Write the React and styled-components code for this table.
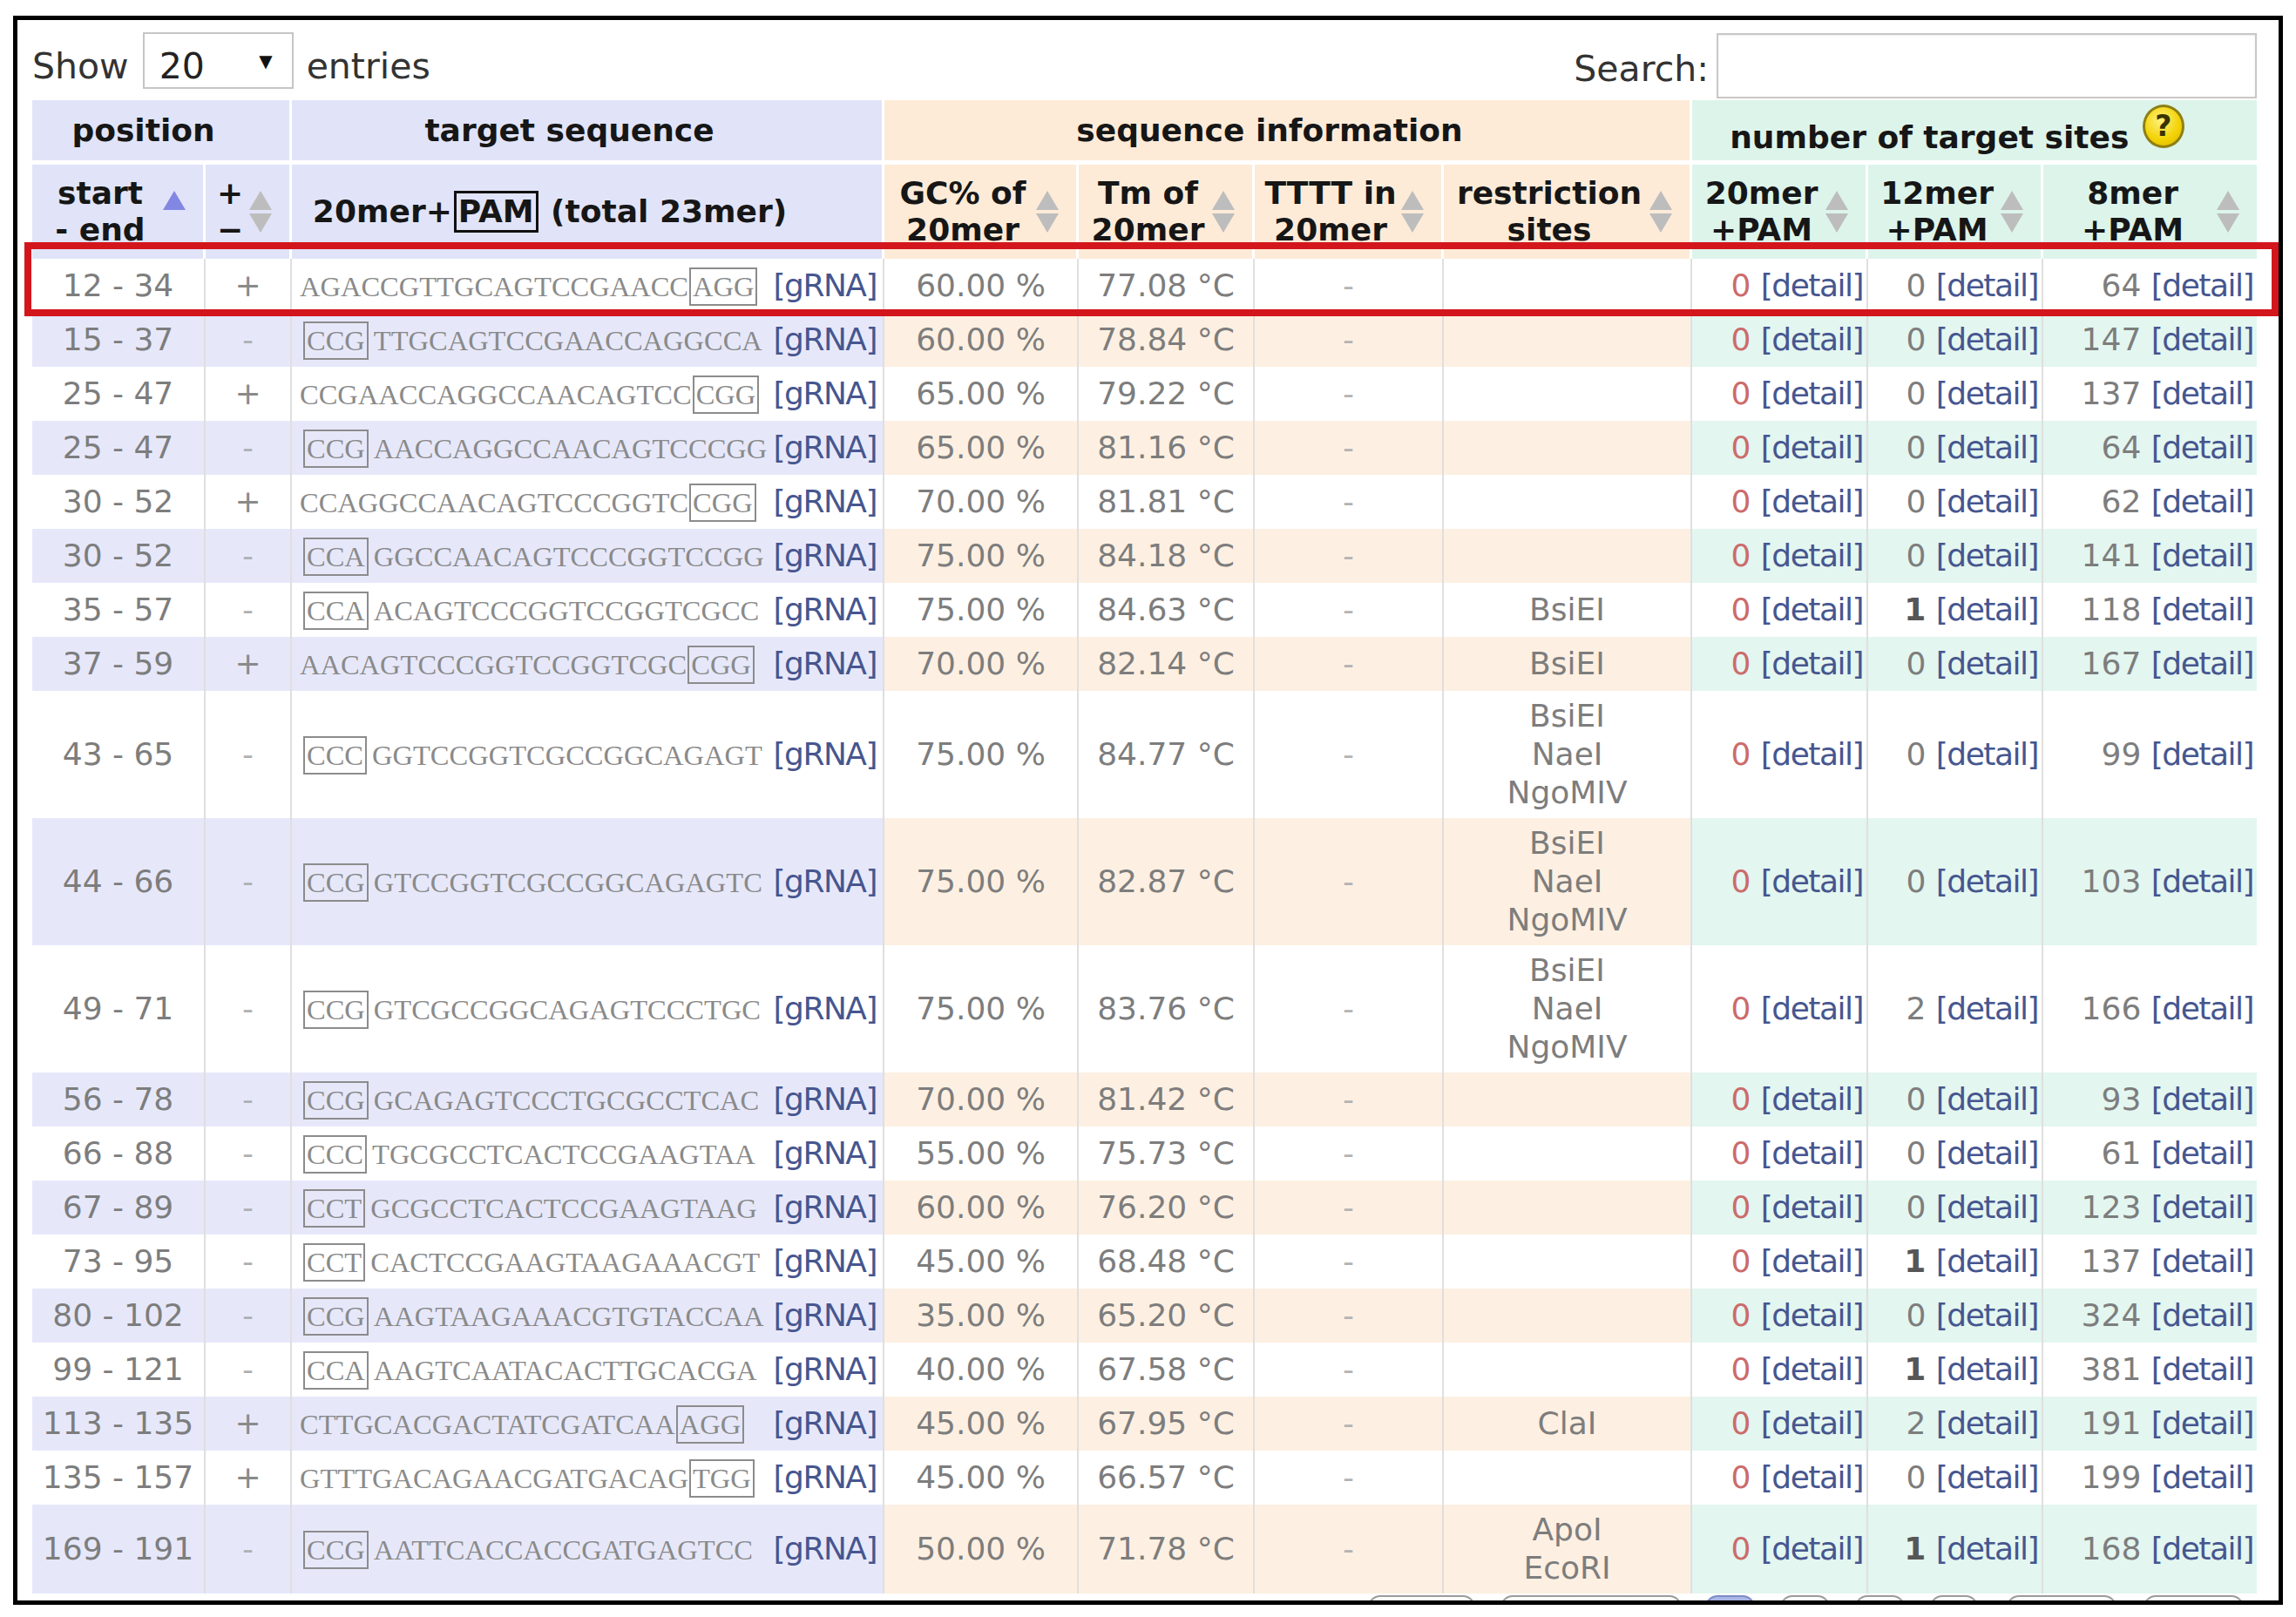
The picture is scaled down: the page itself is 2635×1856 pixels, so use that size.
import React from 'react';
import styled, { createGlobalStyle } from 'styled-components';

const SANS = `"DejaVu Sans", Verdana, sans-serif`;
const SERIF = `"Liberation Serif", "Times New Roman", serif`;

// header and zebra-row colours per column group
const HEAD_BG = { lav: '#e1e4f8', peach: '#fdebd8', mint: '#ddf4eb' };
const ROW_BG = { lav: '#e6e8fa', peach: '#fdf0e2', mint: '#e3f6f0' };

const COLUMNS = [
  { w: 199, group: 'lav', head: ['start', '- end'], sort: 'asc' },
  { w: 99, group: 'lav', head: ['+', '\u2212'], sort: 'both' },
  { w: 680, group: 'lav', head: null, sort: null },
  { w: 223, group: 'peach', head: ['GC% of', '20mer'], sort: 'both' },
  { w: 202, group: 'peach', head: ['Tm of', '20mer'], sort: 'both' },
  { w: 217, group: 'peach', head: ['TTTT in', '20mer'], sort: 'both' },
  { w: 285, group: 'peach', head: ['restriction', 'sites'], sort: 'both' },
  { w: 202, group: 'mint', head: ['20mer', '+PAM'], sort: 'both' },
  { w: 201, group: 'mint', head: ['12mer', '+PAM'], sort: 'both' },
  { w: 245, group: 'mint', head: ['8mer', '+PAM'], sort: 'both' },
];

// position, strand, 20mer, PAM, GC, Tm, sites, 20mer hits, 12mer hits, 8mer hits ('1b' = bold)
const ROWS = [
  ['12 - 34', '+', 'AGACCGTTGCAGTCCGAACC', 'AGG', '60.00 %', '77.08 °C', [], '0', '0', '64'],
  ['15 - 37', '-', 'TTGCAGTCCGAACCAGGCCA', 'CCG', '60.00 %', '78.84 °C', [], '0', '0', '147'],
  ['25 - 47', '+', 'CCGAACCAGGCCAACAGTCC', 'CGG', '65.00 %', '79.22 °C', [], '0', '0', '137'],
  ['25 - 47', '-', 'AACCAGGCCAACAGTCCCGG', 'CCG', '65.00 %', '81.16 °C', [], '0', '0', '64'],
  ['30 - 52', '+', 'CCAGGCCAACAGTCCCGGTC', 'CGG', '70.00 %', '81.81 °C', [], '0', '0', '62'],
  ['30 - 52', '-', 'GGCCAACAGTCCCGGTCCGG', 'CCA', '75.00 %', '84.18 °C', [], '0', '0', '141'],
  ['35 - 57', '-', 'ACAGTCCCGGTCCGGTCGCC', 'CCA', '75.00 %', '84.63 °C', ['BsiEI'], '0', '1b', '118'],
  ['37 - 59', '+', 'AACAGTCCCGGTCCGGTCGC', 'CGG', '70.00 %', '82.14 °C', ['BsiEI'], '0', '0', '167'],
  ['43 - 65', '-', 'GGTCCGGTCGCCGGCAGAGT', 'CCC', '75.00 %', '84.77 °C', ['BsiEI', 'NaeI', 'NgoMIV'], '0', '0', '99'],
  ['44 - 66', '-', 'GTCCGGTCGCCGGCAGAGTC', 'CCG', '75.00 %', '82.87 °C', ['BsiEI', 'NaeI', 'NgoMIV'], '0', '0', '103'],
  ['49 - 71', '-', 'GTCGCCGGCAGAGTCCCTGC', 'CCG', '75.00 %', '83.76 °C', ['BsiEI', 'NaeI', 'NgoMIV'], '0', '2', '166'],
  ['56 - 78', '-', 'GCAGAGTCCCTGCGCCTCAC', 'CCG', '70.00 %', '81.42 °C', [], '0', '0', '93'],
  ['66 - 88', '-', 'TGCGCCTCACTCCGAAGTAA', 'CCC', '55.00 %', '75.73 °C', [], '0', '0', '61'],
  ['67 - 89', '-', 'GCGCCTCACTCCGAAGTAAG', 'CCT', '60.00 %', '76.20 °C', [], '0', '0', '123'],
  ['73 - 95', '-', 'CACTCCGAAGTAAGAAACGT', 'CCT', '45.00 %', '68.48 °C', [], '0', '1b', '137'],
  ['80 - 102', '-', 'AAGTAAGAAACGTGTACCAA', 'CCG', '35.00 %', '65.20 °C', [], '0', '0', '324'],
  ['99 - 121', '-', 'AAGTCAATACACTTGCACGA', 'CCA', '40.00 %', '67.58 °C', [], '0', '1b', '381'],
  ['113 - 135', '+', 'CTTGCACGACTATCGATCAA', 'AGG', '45.00 %', '67.95 °C', ['ClaI'], '0', '2', '191'],
  ['135 - 157', '+', 'GTTTGACAGAACGATGACAG', 'TGG', '45.00 %', '66.57 °C', [], '0', '0', '199'],
  ['169 - 191', '-', 'AATTCACCACCGATGAGTCC', 'CCG', '50.00 %', '71.78 °C', ['ApoI', 'EcoRI'], '0', '1b', '168'],
];

// paging buttons, only their top edge shows above the frame border
const PAGES = [
  { label: 'First', w: 123, gap: 0 },
  { label: 'Previous', w: 208, gap: 29 },
  { label: '1', w: 57, gap: 27, current: true },
  { label: '2', w: 57, gap: 29 },
  { label: '3', w: 57, gap: 29 },
  { label: '4', w: 55, gap: 29 },
  { label: 'Next', w: 126, gap: 33 },
  { label: 'Last', w: 115, gap: 31 },
];

const GlobalStyle = createGlobalStyle`
  html, body {
    margin: 0;
    padding: 0;
    background: #fff;
  }
  body {
    font-family: ${SANS};
  }
`;

const Frame = styled.div`
  box-sizing: border-box;
  width: 2605px;
  height: 1824px;
  margin: 18px 0 0 15px;
  border: 5px solid #000;
  padding: 0 25px 0 17px;
  overflow: hidden;
  background: #fff;
`;

const Toolbar = styled.div`
  box-sizing: border-box;
  height: 92px;
  padding-top: 14px;
  display: flex;
  justify-content: space-between;
  align-items: flex-start;
  font-family: ${SANS};
  font-size: 41px;
  color: #333;
`;

const LengthControl = styled.div`
  display: flex;
  align-items: flex-start;
`;

const Label = styled.span`
  margin-top: ${p => p.$top}px;
  line-height: 48px;
`;

const Select = styled.span`
  box-sizing: border-box;
  display: inline-flex;
  align-items: flex-start;
  justify-content: space-between;
  width: 173px;
  height: 65px;
  margin: 0 15px 0 16px;
  padding: 13px 22px 0 17px;
  border: 2px solid #c6c6c6;
  background: #fff;
  color: #222;
  line-height: 48px;
`;

const Caret = styled.span`
  align-self: center;
  margin-top: -12px;
  font-size: 20px;
  line-height: 20px;
  color: #111;
`;

const SearchControl = styled.div`
  display: flex;
  align-items: flex-start;
`;

const SearchInput = styled.span`
  box-sizing: border-box;
  display: block;
  width: 620px;
  height: 75px;
  margin: 1px 0 0 9px;
  border: 2px solid #c8c8c8;
  box-shadow: inset 0 1px 2px rgba(0, 0, 0, 0.08);
  background: #fff;
`;

const TableWrap = styled.div`
  position: relative;
`;

const Table = styled.table`
  width: 2553px;
  table-layout: fixed;
  border-collapse: separate;
  border-spacing: 0;
  font-family: ${SANS};
`;

const Col = styled.col`
  width: ${p => p.$w}px;
`;

const GroupTh = styled.th`
  background: ${p => HEAD_BG[p.$group]};
  border-right: 3px solid #fff;
  border-bottom: 5px solid #fff;
  padding: 5px 50px 5px 10px;
  font-size: 36px;
  line-height: 42px;
  font-weight: bold;
  color: #161616;
  text-align: center;
  white-space: nowrap;

  &:last-child {
    border-right: 0;
  }
`;

const ColTh = styled.th`
  position: relative;
  background: ${p => HEAD_BG[p.$group]};
  border-right: 3px solid #fff;
  padding: 12px ${p => (p.$plain ? 95 : 50)}px 12px 10px;
  font-size: 36px;
  line-height: 42px;
  font-weight: bold;
  color: #161616;
  text-align: center;
  white-space: nowrap;

  &:last-child {
    border-right: 0;
  }
`;

const HeadLine = styled.span`
  display: block;
`;

const PamHead = styled.span`
  display: inline-block;
  border: 3px solid #111;
  padding: 0 2px;
  line-height: 42px;
  margin: 0 2px;
`;

const Help = styled.span`
  box-sizing: border-box;
  display: inline-block;
  overflow: hidden;
  width: 48px;
  height: 50px;
  margin-left: 3px;
  border-radius: 50%;
  border: 3px solid #8f7f14;
  background: radial-gradient(circle at 42% 35%, #fff27e, #f3d205 58%, #d7b600);
  font-size: 33px;
  line-height: 44px;
  font-weight: bold;
  color: #3a3300;
  text-align: center;
`;

const SortMark = styled.svg`
  position: absolute;
  right: 20px;
  top: 50%;
  margin-top: -25px;
`;

const Tr = styled.tr`
  height: 62px;
`;

const Td = styled.td`
  background: ${p => (p.$alt ? ROW_BG[p.$group] : '#fff')};
  border-right: 2px solid #dfdfdf;
  padding: 7px 4px;
  font-size: 36px;
  line-height: 44px;
  color: #7d7d7d;
  text-align: ${p => p.$align};
  white-space: nowrap;

  &:last-child {
    border-right: 0;
  }
`;

const SeqTd = styled(Td)`
  padding-left: 9px;
  padding-right: 7px;
`;

const SeqLine = styled.span`
  display: flex;
  align-items: baseline;
  justify-content: space-between;
`;

const Seq = styled.span`
  font-family: ${SERIF};
  font-size: 32.5px;
  color: #8a8a8a;
`;

const Pam = styled.span`
  display: inline-block;
  border: 2px solid #8c8c8c;
  padding: 0 2px;
  margin: ${p => (p.$lead ? '0 6px 0 4px' : '0 0 0 1px')};
  line-height: 40px;
`;

const Strand = styled.span`
  color: ${p => (p.$plus ? '#8a8a8a' : '#b0b0b0')};
`;

const Dash = styled.span`
  color: #b3b3b3;
`;

const Site = styled.span`
  display: block;
  color: #7d7d7d;
`;

const Link = styled.span`
  color: #46568f;
  letter-spacing: -1.5px;
`;

const Hits = styled.span`
  color: ${p => (p.$tone === 'red' ? '#cc6b6b' : p.$tone === 'bold' ? '#565656' : '#7d7d7d')};
  font-weight: ${p => (p.$tone === 'bold' ? 'bold' : 'normal')};
`;

const RedBox = styled.div`
  position: absolute;
  left: -9px;
  top: 163px;
  width: 2587px;
  height: 85px;
  box-sizing: border-box;
  border: 8px solid #d3161c;
  pointer-events: none;
`;

const Pager = styled.div`
  display: flex;
  justify-content: flex-end;
  padding: 2px 15px 0 0;
`;

const PageButton = styled.span`
  box-sizing: border-box;
  display: block;
  width: ${p => p.$w}px;
  height: 60px;
  margin-left: ${p => p.$gap}px;
  border: 2px solid ${p => (p.$current ? '#7d8cc6' : '#9b9b9b')};
  border-radius: 14px;
  background: ${p =>
    p.$current ? 'linear-gradient(#aab7e6, #8c9dd8)' : 'linear-gradient(#fdfdfd, #dcdcdc)'};
`;

function SortIcon({ asc }) {
  return (
    <SortMark width="26" height="50" viewBox="0 0 26 50">
      <polygon points="13,1 26,23 0,23" fill={asc ? '#8387e4' : '#bdbdbd'} />
      {!asc && <polygon points="0,27 26,27 13,49" fill="#bdbdbd" />}
    </SortMark>
  );
}

function SequenceCell({ strand, seq, pam, alt }) {
  return (
    <SeqTd $group="lav" $align="left" $alt={alt}>
      <SeqLine>
        <Seq>
          {strand === '+' ? (
            <>
              {seq}
              <Pam>{pam}</Pam>
            </>
          ) : (
            <>
              <Pam $lead>{pam}</Pam>
              {seq}
            </>
          )}
        </Seq>
        <Link>[gRNA]</Link>
      </SeqLine>
    </SeqTd>
  );
}

function HitsCell({ value, alt, red }) {
  const bold = value === '1b';
  const tone = red ? 'red' : bold ? 'bold' : 'gray';
  return (
    <Td $group="mint" $align="right" $alt={alt}>
      <Hits $tone={tone}>{bold ? '1' : value}</Hits> <Link>[detail]</Link>
    </Td>
  );
}

function ResultRow({ row, alt }) {
  const [pos, strand, seq, pam, gc, tm, sites, h20, h12, h8] = row;
  return (
    <Tr>
      <Td $group="lav" $align="center" $alt={alt}>{pos}</Td>
      <Td $group="lav" $align="center" $alt={alt}>
        <Strand $plus={strand === '+'}>{strand}</Strand>
      </Td>
      <SequenceCell strand={strand} seq={seq} pam={pam} alt={alt} />
      <Td $group="peach" $align="center" $alt={alt}>{gc}</Td>
      <Td $group="peach" $align="center" $alt={alt}>{tm}</Td>
      <Td $group="peach" $align="center" $alt={alt}>
        <Dash>-</Dash>
      </Td>
      <Td $group="peach" $align="center" $alt={alt}>
        {sites.map(s => (
          <Site key={s}>{s}</Site>
        ))}
      </Td>
      <HitsCell value={h20} alt={alt} red />
      <HitsCell value={h12} alt={alt} />
      <HitsCell value={h8} alt={alt} />
    </Tr>
  );
}

export default function App() {
  return (
    <>
      <GlobalStyle />
      <Frame>
        <Toolbar>
          <LengthControl>
            <Label $top={15}>Show</Label>
            <Select>
              <span>20</span>
              <Caret>▼</Caret>
            </Select>
            <Label $top={15}>entries</Label>
          </LengthControl>
          <SearchControl>
            <Label $top={18}>Search:</Label>
            <SearchInput />
          </SearchControl>
        </Toolbar>

        <TableWrap>
          <Table>
            <colgroup>
              {COLUMNS.map((c, i) => (
                <Col key={i} $w={c.w} />
              ))}
            </colgroup>
            <thead>
              <tr>
                <GroupTh $group="lav" colSpan={2}>position</GroupTh>
                <GroupTh $group="lav">target sequence</GroupTh>
                <GroupTh $group="peach" colSpan={4}>sequence information</GroupTh>
                <GroupTh $group="mint" colSpan={3}>
                  number of target sites <Help>?</Help>
                </GroupTh>
              </tr>
              <tr>
                {COLUMNS.map((c, i) => (
                  <ColTh key={i} $group={c.group} $plain={!c.sort}>
                    {c.head ? (
                      c.head.map(line => <HeadLine key={line}>{line}</HeadLine>)
                    ) : (
                      <>
                        20mer+<PamHead>PAM</PamHead> (total 23mer)
                      </>
                    )}
                    {c.sort && <SortIcon asc={c.sort === 'asc'} />}
                  </ColTh>
                ))}
              </tr>
            </thead>
            <tbody>
              {ROWS.map((row, i) => (
                <ResultRow key={i} row={row} alt={i % 2 === 1} />
              ))}
            </tbody>
          </Table>
          <RedBox />
        </TableWrap>

        <Pager>
          {PAGES.map(p => (
            <PageButton key={p.label} aria-label={p.label} $w={p.w} $gap={p.gap} $current={p.current} />
          ))}
        </Pager>
      </Frame>
    </>
  );
}
